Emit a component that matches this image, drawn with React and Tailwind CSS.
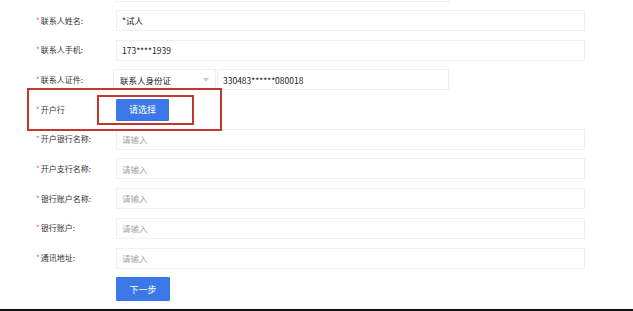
import React from "react";

const font = { fontFamily: '"Noto Sans CJK SC", "Noto Sans", sans-serif' };

function Label({ text }) {
  return (
    <div className="w-[80px] shrink-0 flex items-center text-[8px] text-[#333] leading-none">
      <span className="text-[#e0605a] mr-[1px]">*</span>
      <span>{text}</span>
    </div>
  );
}

function Input({ value, placeholder, w = "w-[469px]" }) {
  return (
    <div className={`${w} h-[21px] border border-[#efefef] flex items-center pl-[5px] text-[8.5px] leading-none`}>
      {value ? (
        <span className="text-[#222]">{value}</span>
      ) : (
        <span className="text-[#a5a5a5]">{placeholder}</span>
      )}
    </div>
  );
}

export default function App() {
  return (
    <div className="relative w-[633px] h-[311px] bg-white overflow-hidden" style={font}>
      <div className="ml-[115px] w-[334px] h-[2px] border border-t-0 border-[#f1f1f1]" />
      <div className="flex flex-col gap-[8.7px] pl-[36px] mt-[8px]">
        <div className="flex items-center h-[21px]">
          <Label text="联系人姓名:" />
          <Input value="*试人" />
        </div>
        <div className="flex items-center h-[21px]">
          <Label text="联系人手机:" />
          <Input value="173****1939" />
        </div>
        <div className="flex items-center h-[21px]">
          <Label text="联系人证件:" />
          <div className="ml-[-3px] w-[103px] h-[21px] border border-[#efefef] flex items-center justify-between pl-[6px] pr-[6px] text-[8.5px] text-[#222] leading-none">
            <span>联系人身份证</span>
            <svg width="6" height="4" viewBox="0 0 6 4">
              <path d="M0 0 L6 0 L3 3.5 Z" fill="#c8c8c8" />
            </svg>
          </div>
          <div className="ml-[1px]">
            <Input value="330483******080018" w="w-[232px]" />
          </div>
        </div>
        <div className="flex items-center h-[21px]">
          <Label text="开户行" />
          <button className="w-[53px] h-[22px] bg-[#3b78e7] text-white text-[9px] leading-none rounded-[1px]">
            请选择
          </button>
        </div>
        <div className="flex items-center h-[21px]">
          <Label text="开户银行名称:" />
          <Input placeholder="请输入" />
        </div>
        <div className="flex items-center h-[21px]">
          <Label text="开户支行名称:" />
          <Input placeholder="请输入" />
        </div>
        <div className="flex items-center h-[21px]">
          <Label text="银行账户名称:" />
          <Input placeholder="请输入" />
        </div>
        <div className="flex items-center h-[21px]">
          <Label text="银行账户:" />
          <Input placeholder="请输入" />
        </div>
        <div className="flex items-center h-[21px]">
          <Label text="通讯地址:" />
          <Input placeholder="请输入" />
        </div>
        <div className="flex items-center h-[24px] pl-[80px]">
          <button className="w-[54px] h-[24px] bg-[#3b78e7] text-white text-[9px] leading-none rounded-[1px]">
            下一步
          </button>
        </div>
      </div>
      <div className="absolute left-[27px] top-[88px] w-[195px] h-[43px] border-2 border-[#c4372c]" />
      <div className="absolute left-[97px] top-[95px] w-[97px] h-[30px] border-2 border-[#c4372c]" />
      <div className="absolute left-0 bottom-0 w-full h-[2px] bg-[#111]" />
    </div>
  );
}
